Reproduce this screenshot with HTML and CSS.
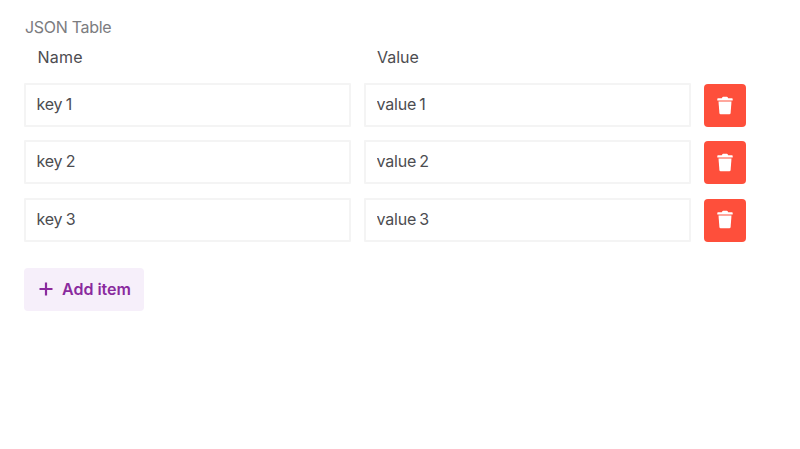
FILE: index.html
```html
<!DOCTYPE html>
<html lang="en">
  <head>
    <meta charset="utf-8">
    <meta name="viewport" content="width=device-width, initial-scale=1">

    <title>JSON Table</title>

    <link rel="stylesheet" href="styles.css">
  </head>

  <body>
    <!-- Trash icon, shared by all the delete buttons -->
    <svg class="iconDefs" width="0" height="0">
      <symbol id="trash" viewBox="0 0 18 20">
        <path d="M6.2 1.4q.3-.6 1-.6h3.6q.7 0 1 .6l.4.9H16q.7 0 .7.7v1.6H1.3V3q0-.7.7-.7h3.8z" />
        <path d="M2.5 5.4h13l-.9 11.7q-.1 1.2-1.2 1.2H4.6q-1.1 0-1.2-1.2z" />
      </symbol>
    </svg>

    <form class="jsonTable">
      <div class="jsonTable-label"><span>JSON Table</span></div>
      <div class="jsonTable-head">
        <span class="nameHead">Name</span>
        <span class="valueHead">Value</span>
      </div>

      <div class="jsonTable-rows">
        <div class="jsonTable-row">
          <input type="text" value="key 1" aria-label="Name">
          <input type="text" value="value 1" aria-label="Value">
          <button type="button" class="deleteBtn" aria-label="Delete"><svg><use href="#trash" /></svg></button>
        </div>
        <div class="jsonTable-row">
          <input type="text" value="key 2" aria-label="Name">
          <input type="text" value="value 2" aria-label="Value">
          <button type="button" class="deleteBtn" aria-label="Delete"><svg><use href="#trash" /></svg></button>
        </div>
        <div class="jsonTable-row">
          <input type="text" value="key 3" aria-label="Name">
          <input type="text" value="value 3" aria-label="Value">
          <button type="button" class="deleteBtn" aria-label="Delete"><svg><use href="#trash" /></svg></button>
        </div>
      </div>

      <button type="button" class="addBtn">
        <svg viewBox="0 0 14 14"><path d="M7 .5v13M.5 7h13" /></svg>
        <span>Add item</span>
      </button>
    </form>
  </body>

</html>
```
FILE: styles.css
```css
body {
  margin: 0;
  background-color: #fff;
  color: #4c4c50;
  font: 16px/20px Inter, "Liberation Sans", sans-serif;
}

.iconDefs {
  display: block;
}

.jsonTable {
  width: 722px;
  padding: 17px 0 0 24px;
}

.jsonTable-label {
  padding-left: 1px;
  color: #7c7c7f;
  letter-spacing: -0.3px;
}

.jsonTable-head, .jsonTable-row {
  display: grid;
  grid-template-columns: 327px 327px 42px;
  column-gap: 13px;
}

.jsonTable-head {
  padding: 10px 0 16px;
}
.jsonTable-head span {
  padding-left: 13px;
}
.jsonTable-head .nameHead {
  padding-left: 13.5px;
  letter-spacing: 0.2px;
}

.jsonTable-rows {
  display: grid;
  row-gap: 13.4px;
}

.jsonTable-row {
  height: 44px;
}

input {
  box-sizing: border-box;
  width: 100%;
  height: 44px;
  padding: 0 12px 2px 10.5px;
  border: 2px solid #f4f4f4;
  border-radius: 1px;
  background-color: #fff;
  color: inherit;
  font: inherit;
  letter-spacing: -0.2px;
  word-spacing: -1px;
}

button {
  display: flex;
  align-items: center;
  padding: 0;
  border: 0;
  font: inherit;
}

.deleteBtn {
  justify-content: center;
  height: 43px;
  margin-top: 1px;
  border-radius: 4px;
  background-color: #fe4f3b;
}
.deleteBtn svg {
  width: 18px;
  height: 20px;
  fill: #fff;
}

.addBtn {
  gap: 9px;
  width: 120px;
  height: 43px;
  margin-top: 26px;
  padding-left: 15px;
  border-radius: 4px;
  background-color: #f6effa;
  color: #8a2a9e;
  font-weight: 600;
}
.addBtn svg {
  width: 14px;
  height: 14px;
  stroke: currentColor;
  stroke-width: 2.2;
}
```
